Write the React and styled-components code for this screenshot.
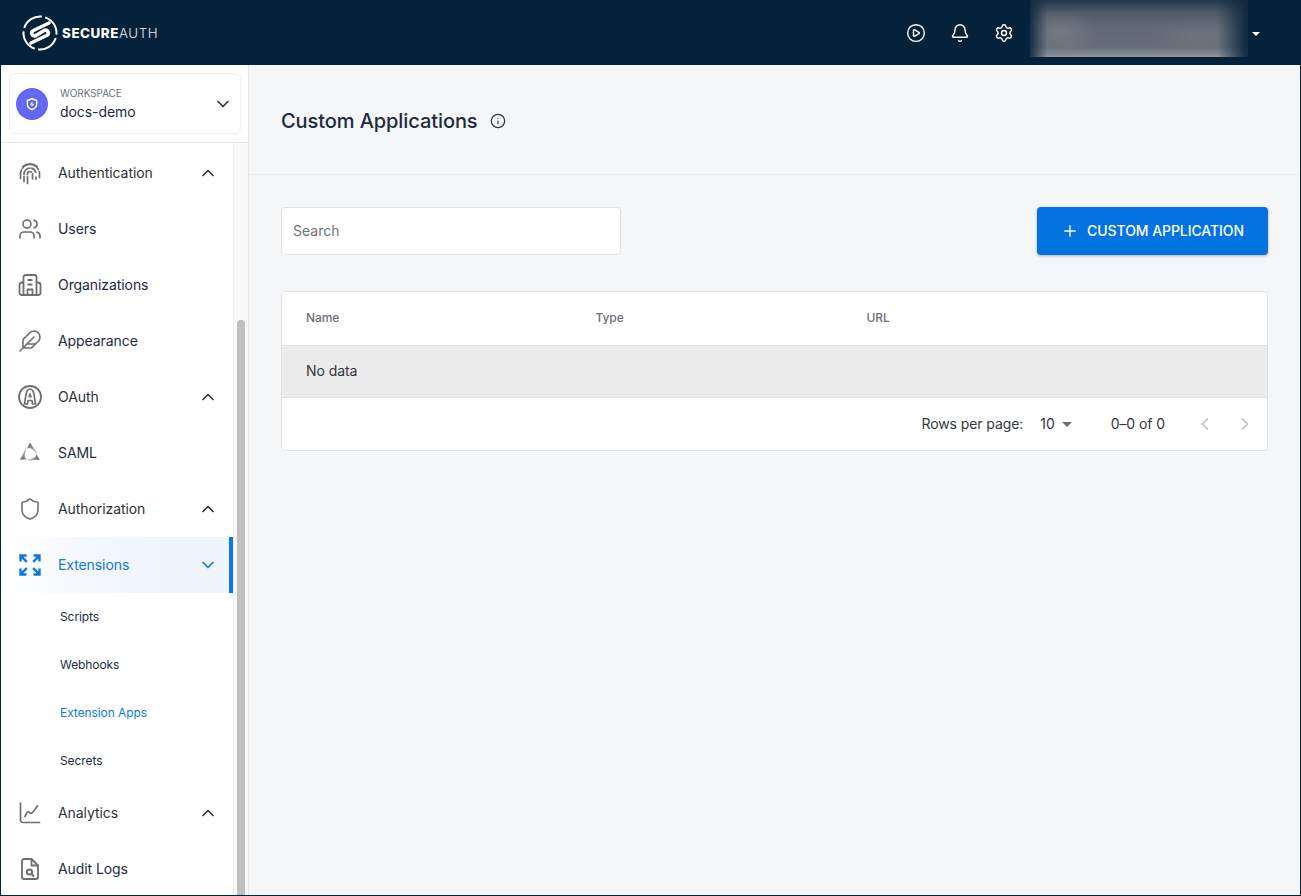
import React from 'react';
import styled, { createGlobalStyle } from 'styled-components';
import { Bell, ChevronDown, ChevronLeft, ChevronRight, ChevronUp, CirclePlay, Feather, Info, Plus, Settings, Shield, Users } from 'lucide-react';

const GlobalStyle = createGlobalStyle`
  html, body { margin: 0; padding: 0; height: 100%; }
  body { font-family: Inter, "Liberation Sans", sans-serif; letter-spacing: -0.005em; background: #f5f6f8; overflow: hidden; }
  * { box-sizing: border-box; }
`;

const Frame = styled.div`
  width: 1301px;
  height: 896px;
  display: flex;
  flex-direction: column;
  border: 1px solid #05223c;
  border-top: 0;
  overflow: hidden;
`;

// Top bar
const TopBar = styled.header`
  height: 65px;
  flex: none;
  background: #05223c;
  display: flex;
  align-items: flex-start;
  padding-left: 20px;
  color: #fff;
`;

const Logo = styled.div`
  height: 65px;
  display: flex;
  align-items: center;
  gap: 3px;
`;

const LogoText = styled.div`
  font-size: 13.3px;
  letter-spacing: 0.6px;
  font-weight: 300;
  color: #e8ebee;
  b { font-weight: 800; color: #fff; }
`;

const TopActions = styled.div`
  margin-left: auto;
  display: flex;
  align-items: flex-start;
`;

const TopIcon = styled.div`
  width: 44px;
  height: 65px;
  display: flex;
  align-items: center;
  justify-content: center;
`;

const BlurBox = styled.div`
  width: 218px;
  height: 57px;
  margin-left: 4px;
  background:
    linear-gradient(90deg, rgba(15, 40, 62, 0.9) 0%, rgba(15, 40, 62, 0) 8%, rgba(15, 40, 62, 0) 86%, rgba(15, 40, 62, 0.95) 99%),
    radial-gradient(ellipse 40px 24px at 14% 58%, rgba(130, 135, 142, 0.55), rgba(130, 135, 142, 0)),
    radial-gradient(ellipse 60px 20px at 78% 62%, rgba(125, 130, 136, 0.4), rgba(125, 130, 136, 0)),
    linear-gradient(180deg, #23384c 0%, #4d5a68 22%, #5e6873 45%, #646d78 82%, #8e9399 100%);
`;

const Caret = styled.div`
  width: 52px;
  height: 65px;
  display: flex;
  align-items: center;
  padding-left: 4px;
  &::before {
    content: '';
    border-left: 4px solid transparent;
    border-right: 4px solid transparent;
    border-top: 4px solid #fff;
    margin-top: 3px;
  }
`;

const Body = styled.div`
  flex: 1;
  min-height: 0;
  display: flex;
`;

// Sidebar
const Sidebar = styled.aside`
  width: 248px;
  flex: none;
  background: #fff;
  border-right: 1px solid #e4e6e9;
  display: flex;
  flex-direction: column;
`;

const WorkspaceArea = styled.div`
  height: 78px;
  flex: none;
  padding: 8px 7px 8px 8px;
  border-bottom: 1px solid #e4e6e9;
`;

const WorkspaceCard = styled.div`
  height: 61px;
  border: 1px solid #eceef1;
  border-radius: 6px;
  display: flex;
  align-items: center;
  padding: 0 7px 0 6px;
`;

const WorkspaceBadge = styled.div`
  width: 32px;
  height: 32px;
  border-radius: 50%;
  background: #6567f0;
  display: flex;
  align-items: center;
  justify-content: center;
  margin-right: 12px;
`;

const WorkspaceText = styled.div`
  flex: 1;
  display: flex;
  flex-direction: column;
  gap: 4px;
  padding-bottom: 1px;
`;

const WorkspaceLabel = styled.span`
  font-size: 10px;
  line-height: 12px;
  color: #6b7280;
`;

const WorkspaceName = styled.span`
  font-size: 14px;
  line-height: 17px;
  color: #1c2b3f;
`;

const NavArea = styled.div`
  flex: 1;
  min-height: 0;
  display: flex;
`;

const NavList = styled.nav`
  flex: 1;
  overflow: hidden;
  padding-top: 2px;
`;

const NavRow = styled.div`
  height: 56px;
  display: flex;
  align-items: center;
  padding: 0 15px 0 17px;
  font-size: 14px;
  color: ${(props) => (props.$active ? '#0b78e3' : props.$group ? '#2e3138' : '#1c2b3f')};
  background: ${(props) => (props.$active ? 'linear-gradient(90deg, #ffffff 0%, #f1f5fd 55%, #eff4fd 100%)' : 'transparent')};
  ${(props) => props.$active && 'border-right: 4px solid #0b78e3; padding-right: 11px;'}
`;

const NavIcon = styled.div`
  width: 24px;
  height: 24px;
  margin-right: 16px;
  display: flex;
  align-items: center;
  justify-content: center;
  color: ${(props) => (props.$active ? '#0b78e3' : '#6e6e6e')};
`;

const NavLabel = styled.span`
  flex: 1;
  padding-bottom: 2px;
`;

const SubRow = styled.div`
  height: 48px;
  display: flex;
  align-items: center;
  padding: 0 0 2px 59px;
  font-size: 12px;
  color: ${(props) => (props.$active ? '#0b78e3' : '#1c2b3f')};
`;

const ScrollTrack = styled.div`
  width: 15px;
  flex: none;
  background: #f8f8f8;
  border-left: 1px solid #eeeeee;
  padding: 177px 3px 0 3px;
`;

const ScrollThumb = styled.div`
  height: 100%;
  background: #bfbfbf;
  border-radius: 4px 4px 0 0;
`;

// Main content
const Main = styled.main`
  flex: 1;
  background: #f5f6f8;
`;

const PageHeader = styled.div`
  height: 110px;
  border-bottom: 1px solid #e9ebee;
  display: flex;
  align-items: center;
  padding: 2px 0 0 32px;
  gap: 12px;
`;

const Title = styled.h1`
  margin: 0;
  font-size: 20px;
  font-weight: 500;
  color: #1c2b3f;
`;

const Content = styled.div`
  padding: 32px 32px 0;
`;

const Toolbar = styled.div`
  display: flex;
  justify-content: space-between;
  margin-bottom: 36px;
`;

const Search = styled.input`
  width: 340px;
  height: 48px;
  border: 1px solid #dfe1e5;
  border-radius: 4px;
  background: #fff;
  padding: 0 11px 2px;
  font: 400 14px Inter, "Liberation Sans", sans-serif;
  outline: none;
  &::placeholder { color: #6f7278; opacity: 1; }
`;

const PrimaryButton = styled.button`
  width: 231px;
  height: 48px;
  border: 0;
  border-radius: 4px;
  background: #0273e1;
  color: #fff;
  display: flex;
  align-items: center;
  justify-content: center;
  gap: 8px;
  padding: 0;
  font: 500 14px Inter, "Liberation Sans", sans-serif;
  letter-spacing: -0.005em;
  box-shadow: 0 1px 3px rgba(0, 0, 0, 0.3);
`;

const ButtonLabel = styled.span`
  padding-bottom: 2px;
`;

const Table = styled.div`
  width: 987px;
  height: 160px;
  border: 1px solid #e0e2e6;
  border-radius: 4px;
  background: #fff;
  overflow: hidden;
`;

const HeadRow = styled.div`
  height: 53px;
  display: grid;
  grid-template-columns: 289.5px 271px 1fr;
  align-items: center;
  padding: 0 0 2px 24px;
  font-size: 12px;
  font-weight: 500;
  color: #6c6f75;
`;

const EmptyRow = styled.div`
  height: 53px;
  background: #ebebeb;
  border-top: 1px solid #e0e0e0;
  border-bottom: 1px solid #e0e0e0;
  display: flex;
  align-items: center;
  padding: 0 0 2px 24px;
  font-size: 14px;
  color: #33363c;
`;

const Pagination = styled.div`
  height: 52px;
  display: flex;
  align-items: center;
  justify-content: flex-end;
  font-size: 14px;
  color: #33363c;
  padding: 0 2px 1px 0;
`;

const PageSize = styled.div`
  display: flex;
  align-items: center;
  margin-left: 17px;
  gap: 7px;
  margin-top: -1px;
  &::after {
    content: '';
    border-left: 5px solid transparent;
    border-right: 5px solid transparent;
    border-top: 5px solid #6f6f6f;
    margin-top: 2px;
  }
`;

const PageCount = styled.span`
  margin-left: 39px;
  margin-right: 20px;
`;

const PageButton = styled.div`
  width: 40px;
  display: flex;
  justify-content: center;
  color: #bdbdbd;
`;

const LogoMark = () => (
  <svg width="38" height="38" viewBox="0 0 38 38" fill="none">
    <circle cx="19" cy="19" r="16.5" stroke="#fff" strokeWidth="2" strokeDasharray="22 3.500 22.500 3.500" strokeDashoffset="-1" transform="rotate(-75 19 19)" />
    <path d="M28 9 L12.500 16.500 C9 18.500 11 23 15 21.500 L23 16.500 C27 15 29 19.500 25.500 21.500 L10 29" stroke="#fff" strokeWidth="3.600" strokeLinecap="round" strokeLinejoin="round" />
  </svg>
);

const WorkspaceShield = () => (
  <svg width="14" height="14" viewBox="0 0 24 24" fill="none" stroke="#fff" strokeWidth="2.400" strokeLinejoin="round">
    <path d="M12 3l8 3v6c0 5-3.500 8-8 9.500C7.500 20 4 17 4 12V6z" />
    <path d="M13 8.500l-3 4h4l-3 3" strokeWidth="1.800" />
  </svg>
);

const FingerprintIcon = () => (
  <svg width="24" height="24" viewBox="0 0 24 24" fill="none" stroke="currentColor" strokeWidth="1.700" strokeLinecap="round">
    <path d="M5 5.500C9 2 15 2 19 5.500" />
    <path d="M2.500 17.500V13a9.500 9.500 0 0 1 19 0v4.500" strokeDasharray="9 1.800 14 1.800 3 2 6" />
    <path d="M6 20.500V13a6 6 0 0 1 12 0v7" strokeDasharray="5 2 9 2 6" />
    <path d="M9.500 22.500V13a2.500 2.500 0 0 1 5 0v9" strokeDasharray="7 2 6 2 5" />
  </svg>
);

const BuildingIcon = () => (
  <svg width="24" height="24" viewBox="0 0 24 24" fill="none" stroke="currentColor" strokeWidth="1.800" strokeLinejoin="round">
    <path d="M5.500 22V4a2 2 0 0 1 2-2h9a2 2 0 0 1 2 2v18" />
    <path d="M5.500 9.500H4a2.500 2.500 0 0 0-2.500 2.500v7.500A2.500 2.500 0 0 0 4 22h16a2.500 2.500 0 0 0 2.500-2.500V12A2.500 2.500 0 0 0 20 9.500h-1.500" />
    <path d="M9.500 7h5M9.500 11.500h5M9.500 22v-5.500h5V22" />
  </svg>
);

const OAuthIcon = () => (
  <svg width="24" height="24" viewBox="0 0 24 24" fill="none" stroke="currentColor" strokeWidth="1.800" strokeLinejoin="round">
    <circle cx="12" cy="12" r="11" />
    <path d="M6.500 19L8 9.500Q9 4 12 4T16 9.500L17.500 19H14.500L14 15.500H10L9.500 19Z" strokeWidth="1.700" />
    <path d="M12 8.500l1.300 3.500h-2.600z" strokeWidth="1.200" />
  </svg>
);

const SamlIcon = () => (
  <svg width="24" height="24" viewBox="0 0 24 24">
    <defs>
      <linearGradient id="samlBlade" x1="0.300" y1="0" x2="0.800" y2="1">
        <stop offset="0" stopColor="#666666" />
        <stop offset="0.6" stopColor="#9a9a9a" stopOpacity="0.700" />
        <stop offset="1" stopColor="#c4c4c4" stopOpacity="0.200" />
      </linearGradient>
    </defs>
    {[0, 120, 240].map((angle) => (
      <path key={angle} d="M12 1.500L15 6Q19 11 21 17Q17.500 10.500 13 7.500Q11 6.500 9 7.500Z" fill="url(#samlBlade)" transform={`rotate(${angle} 12 13)`} />
    ))}
  </svg>
);

const ExpandIcon = () => (
  <svg width="22" height="22" viewBox="0 0 22 22" fill="none" stroke="currentColor" strokeWidth="2.400">
    <path d="M1.500 7.500V1.500h6M1.800 1.800l6 6" />
    <path d="M20.500 7.500V1.500h-6M20.200 1.800l-6 6" />
    <path d="M1.500 14.500v6h6M1.800 20.200l6-6" />
    <path d="M20.500 14.500v6h-6M20.200 20.200l-6-6" />
  </svg>
);

const ChartIcon = () => (
  <svg width="24" height="24" viewBox="0 0 24 24" fill="none" stroke="currentColor" strokeWidth="1.700" strokeLinecap="round" strokeLinejoin="round">
    <path d="M2.500 2v17a2.500 2.500 0 0 0 2.500 2.500H21.500" />
    <path d="M7 15.500c1.500-4 3-5.500 4-4.500s1.500 2 3 1 3-4 5.500-7" />
  </svg>
);

const AuditIcon = () => (
  <svg width="24" height="24" viewBox="0 0 24 24" fill="none" stroke="currentColor" strokeWidth="1.800" strokeLinecap="round" strokeLinejoin="round">
    <path d="M13.500 2H6a2 2 0 0 0-2 2v16a2 2 0 0 0 2 2h12a2 2 0 0 0 2-2V8.500z" />
    <path d="M13.500 2v6.500H20" />
    <circle cx="11.500" cy="15" r="2.600" strokeWidth="2" />
    <path d="M13.500 17l2 2" strokeWidth="2" />
  </svg>
);

const navItems = [
  { label: 'Authentication', icon: <FingerprintIcon />, group: true },
  { label: 'Users', icon: <Users size={24} strokeWidth={1.6} /> },
  { label: 'Organizations', icon: <BuildingIcon /> },
  { label: 'Appearance', icon: <Feather size={24} strokeWidth={1.6} /> },
  { label: 'OAuth', icon: <OAuthIcon />, group: true },
  { label: 'SAML', icon: <SamlIcon /> },
  { label: 'Authorization', icon: <Shield size={24} strokeWidth={1.6} />, group: true },
];

const subItems = ['Scripts', 'Webhooks', 'Extension Apps', 'Secrets'];

const App = () => {
  return (
    <>
      <GlobalStyle />
      <Frame>
        <TopBar>
          <Logo>
            <LogoMark />
            <LogoText><b>SECURE</b>AUTH</LogoText>
          </Logo>
          <TopActions>
            <TopIcon><CirclePlay size={20} strokeWidth={1.7} /></TopIcon>
            <TopIcon><Bell size={20} strokeWidth={1.7} /></TopIcon>
            <TopIcon><Settings size={20} strokeWidth={1.7} /></TopIcon>
            <BlurBox />
            <Caret />
          </TopActions>
        </TopBar>
        <Body>
          <Sidebar>
            <WorkspaceArea>
              <WorkspaceCard>
                <WorkspaceBadge><WorkspaceShield /></WorkspaceBadge>
                <WorkspaceText>
                  <WorkspaceLabel>WORKSPACE</WorkspaceLabel>
                  <WorkspaceName>docs-demo</WorkspaceName>
                </WorkspaceText>
                <ChevronDown size={20} color="#2e3138" />
              </WorkspaceCard>
            </WorkspaceArea>
            <NavArea>
              <NavList>
                {navItems.map((item) => (
                  <NavRow key={item.label} $group={item.group}>
                    <NavIcon>{item.icon}</NavIcon>
                    <NavLabel>{item.label}</NavLabel>
                    {item.group && <ChevronUp size={20} color="#2e3138" />}
                  </NavRow>
                ))}
                <NavRow $active>
                  <NavIcon $active><ExpandIcon /></NavIcon>
                  <NavLabel>Extensions</NavLabel>
                  <ChevronDown size={20} color="#0b78e3" />
                </NavRow>
                {subItems.map((label) => (
                  <SubRow key={label} $active={label === 'Extension Apps'}>{label}</SubRow>
                ))}
                <NavRow $group>
                  <NavIcon><ChartIcon /></NavIcon>
                  <NavLabel>Analytics</NavLabel>
                  <ChevronUp size={20} color="#2e3138" />
                </NavRow>
                <NavRow>
                  <NavIcon><AuditIcon /></NavIcon>
                  <NavLabel>Audit Logs</NavLabel>
                </NavRow>
              </NavList>
              <ScrollTrack><ScrollThumb /></ScrollTrack>
            </NavArea>
          </Sidebar>
          <Main>
            <PageHeader>
              <Title>Custom Applications</Title>
              <Info size={16} color="#33363c" strokeWidth={1.8} />
            </PageHeader>
            <Content>
              <Toolbar>
                <Search placeholder="Search" />
                <PrimaryButton><Plus size={18} strokeWidth={1.8} /><ButtonLabel>CUSTOM APPLICATION</ButtonLabel></PrimaryButton>
              </Toolbar>
              <Table>
                <HeadRow>
                  <span>Name</span>
                  <span>Type</span>
                  <span>URL</span>
                </HeadRow>
                <EmptyRow>No data</EmptyRow>
                <Pagination>
                  <span>Rows per page:</span>
                  <PageSize>10</PageSize>
                  <PageCount>0–0 of 0</PageCount>
                  <PageButton><ChevronLeft size={20} /></PageButton>
                  <PageButton><ChevronRight size={20} /></PageButton>
                </Pagination>
              </Table>
            </Content>
          </Main>
        </Body>
      </Frame>
    </>
  );
};

export default App;
